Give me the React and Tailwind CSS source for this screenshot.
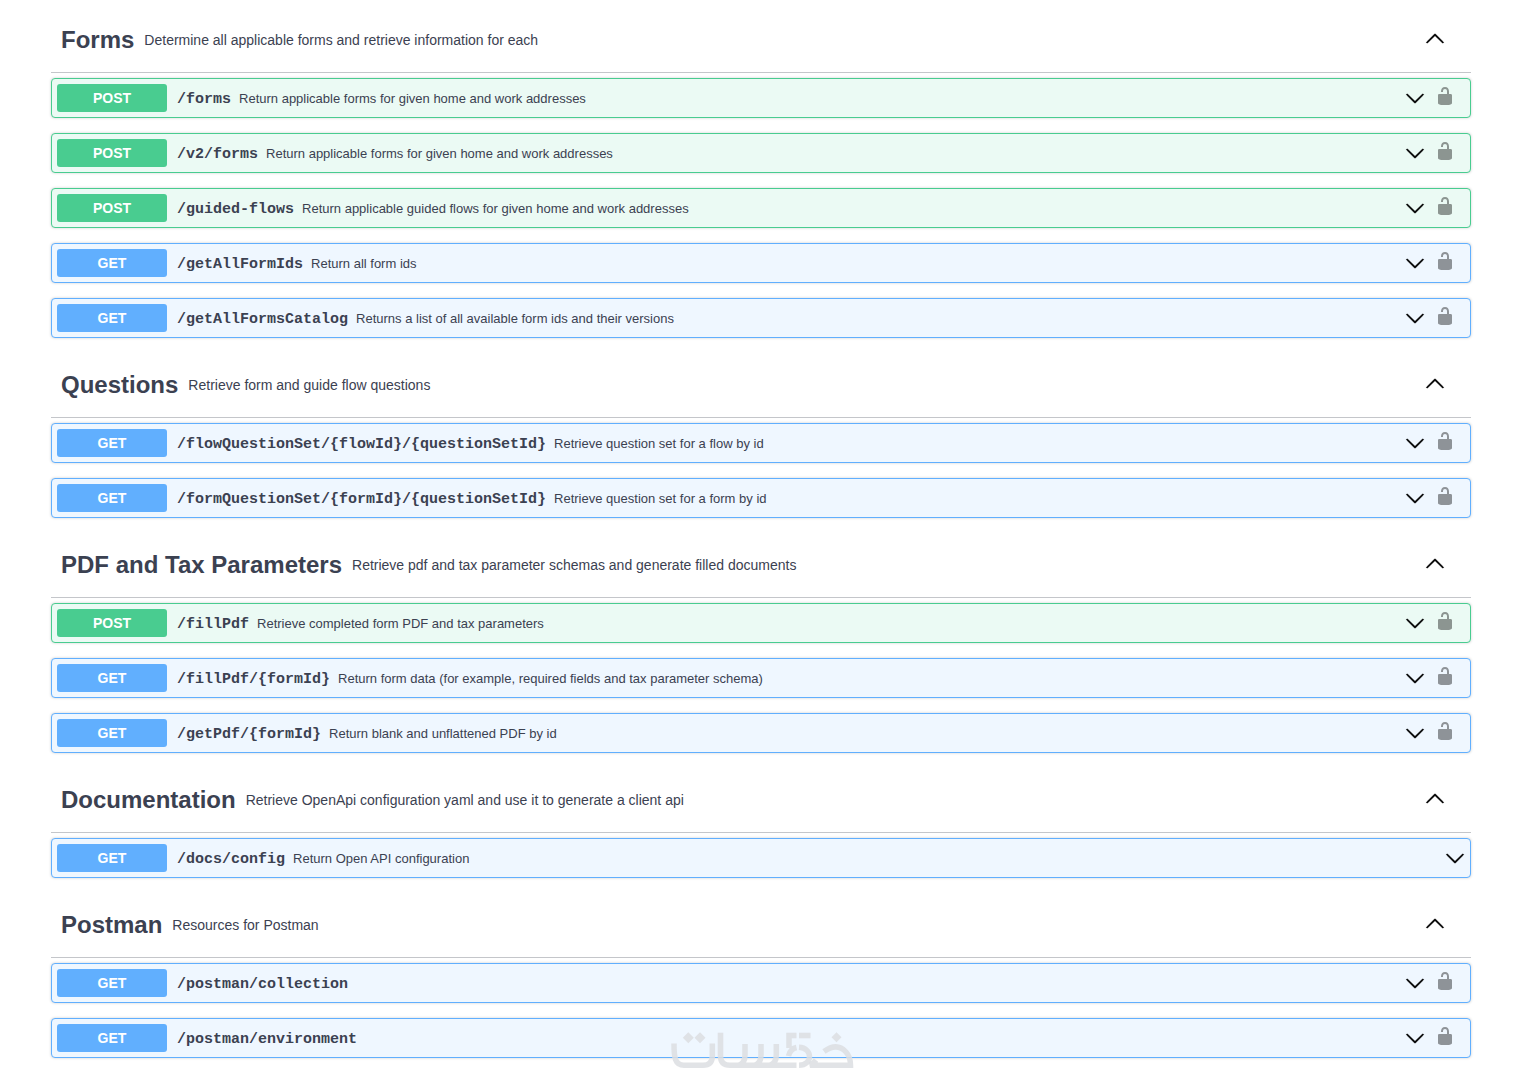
const sections = [
  {
    name: 'Forms',
    description: 'Determine all applicable forms and retrieve information for each',
    operations: [
      { method: 'POST', path: '/forms', summary: 'Return applicable forms for given home and work addresses', auth: true },
      { method: 'POST', path: '/v2/forms', summary: 'Return applicable forms for given home and work addresses', auth: true },
      { method: 'POST', path: '/guided-flows', summary: 'Return applicable guided flows for given home and work addresses', auth: true },
      { method: 'GET', path: '/getAllFormIds', summary: 'Return all form ids', auth: true },
      { method: 'GET', path: '/getAllFormsCatalog', summary: 'Returns a list of all available form ids and their versions', auth: true },
    ],
  },
  {
    name: 'Questions',
    description: 'Retrieve form and guide flow questions',
    operations: [
      { method: 'GET', path: '/flowQuestionSet/{flowId}/{questionSetId}', summary: 'Retrieve question set for a flow by id', auth: true },
      { method: 'GET', path: '/formQuestionSet/{formId}/{questionSetId}', summary: 'Retrieve question set for a form by id', auth: true },
    ],
  },
  {
    name: 'PDF and Tax Parameters',
    description: 'Retrieve pdf and tax parameter schemas and generate filled documents',
    operations: [
      { method: 'POST', path: '/fillPdf', summary: 'Retrieve completed form PDF and tax parameters', auth: true },
      { method: 'GET', path: '/fillPdf/{formId}', summary: 'Return form data (for example, required fields and tax parameter schema)', auth: true },
      { method: 'GET', path: '/getPdf/{formId}', summary: 'Return blank and unflattened PDF by id', auth: true },
    ],
  },
  {
    name: 'Documentation',
    description: 'Retrieve OpenApi configuration yaml and use it to generate a client api',
    operations: [
      { method: 'GET', path: '/docs/config', summary: 'Return Open API configuration', auth: false },
    ],
  },
  {
    name: 'Postman',
    description: 'Resources for Postman',
    operations: [
      { method: 'GET', path: '/postman/collection', summary: '', auth: true },
      { method: 'GET', path: '/postman/environment', summary: '', auth: true },
    ],
  },
]

const methodStyles = {
  POST: { row: 'border-[#49cc90] bg-[#ebfaf4]', badge: 'bg-[#49cc90]' },
  GET: { row: 'border-[#61affe] bg-[#eff7ff]', badge: 'bg-[#61affe]' },
}

function ArrowUp() {
  return (
    <svg viewBox="0 0 20 20" className="size-5" fill="currentColor" stroke="currentColor" strokeWidth="0.4" aria-hidden="true">
      <path d="M17.418 14.908c.272.268.709.268.979 0s.271-.701 0-.969l-7.908-7.83c-.27-.268-.707-.268-.979 0l-7.908 7.83c-.27.268-.27.701 0 .969.271.268.709.268.979 0L10 7.767l7.418 7.141z" />
    </svg>
  )
}

function ArrowDown() {
  return (
    <svg viewBox="0 0 20 20" className="size-5" fill="currentColor" stroke="currentColor" strokeWidth="0.4" aria-hidden="true">
      <path d="M17.418 6.109c.272-.268.709-.268.979 0s.271.701 0 .969l-7.908 7.83c-.27.268-.707.268-.979 0l-7.908-7.83c-.27-.268-.27-.701 0-.969.271-.268.709-.268.979 0L10 13.25l7.418-7.141z" />
    </svg>
  )
}

function Unlocked() {
  return (
    <svg viewBox="0 0 20 20" className="size-5 opacity-40" fill="currentColor" aria-hidden="true">
      <path d="M15.8 8H14V5.6C14 2.703 12.665 1 10 1 7.334 1 6 2.703 6 5.6V6h2v-.801C8 3.754 8.797 3 10 3c1.203 0 2 .754 2 2.199V8H4c-.553 0-1 .646-1 1.199V17c0 .549.428 1.139.951 1.307l1.197.387C5.672 18.861 6.55 19 7.1 19h5.8c.549 0 1.428-.139 1.951-.307l1.196-.387c.524-.167.953-.757.953-1.306V9.199C17 8.646 16.352 8 15.8 8z" />
    </svg>
  )
}

function Operation({ method, path, summary, auth }) {
  const styles = methodStyles[method]

  return (
    <div className={`flex h-10 items-center rounded border px-[5px] shadow-[0_0_3px_rgba(0,0,0,0.19)] ${styles.row}`}>
      <button className="flex flex-1 items-center text-left">
        <span className={`w-[110px] rounded-[3px] text-center text-sm leading-7 font-bold text-white ${styles.badge}`}>
          {method}
        </span>
        <span className="pt-1 pl-[10px] font-['Liberation_Mono',monospace] text-[15px] leading-5 font-bold">{path}</span>
        <span className="pt-0.5 pl-2 text-[13px] leading-5">{summary}</span>
      </button>
      <button className="text-black" aria-label={`Expand ${path}`}>
        <ArrowDown />
      </button>
      {auth && (
        <button className="px-[10px] pb-1 text-black" aria-label={`Authorize ${path}`}>
          <Unlocked />
        </button>
      )}
    </div>
  )
}

function Section({ name, description, operations }) {
  return (
    <section>
      <header className="flex h-[65px] items-center border-b border-[#3b4151]/30 pr-[26px] pl-[10px]">
        <h2 className="text-2xl font-bold">{name}</h2>
        <p className="flex-1 pl-[10px] text-sm">{description}</p>
        <button className="pb-1 text-black" aria-label={`Collapse ${name}`}>
          <ArrowUp />
        </button>
      </header>
      <div className="flex flex-col gap-[15px] pt-[5px] pb-[15px]">
        {operations.map(op => (
          <Operation key={op.path} {...op} />
        ))}
      </div>
    </section>
  )
}

function Watermark() {
  return (
    <svg
      viewBox="0 0 184 38"
      className="pointer-events-none absolute bottom-[21px] left-1/2 h-[38px] w-[184px] -translate-x-1/2"
      fill="none"
      stroke="#dcdee2"
      strokeOpacity="0.85"
      strokeWidth="5.5"
      role="img"
      aria-label="خمسات"
    >
      <path d="M3 11.500C3 26 4 33.300 13 33.300H32Q41.300 33.300 41.300 24V11.500" />
      <path d="M49.500 .7V24Q49.500 33.300 59 33.300H125.500M74 12V23Q74 31 68 33M90 12V23Q90 31 84 33M105.300 12V23Q105.300 31 99 33" />
      <path d="M125.500 3.500H118V16M128 3.500H139.500M117.500 24Q119 17 125.500 15.500M128 15.300C142 16 142 33 128 33.300" />
      <path d="M153 19.500Q166 10 175 20Q179.500 25 179.500 33.300H139Q142 32 145 28" />
      <path
        d="M17.300 .2l5.500 5.500-5.500 5.500-5.500-5.500zM29 .2l5.500 5.500-5.500 5.500-5.500-5.500zM165.500 .2l5 5-5 5-5-5z"
        fill="#dcdee2"
        fillOpacity="0.85"
        stroke="none"
      />
    </svg>
  )
}

export default function App() {
  return (
    <main className="relative bg-white pt-2 pr-[54px] pb-[18px] pl-[51px] font-['Liberation_Sans',Arial,sans-serif] text-[#3b4151]">
      {sections.map(section => (
        <Section key={section.name} {...section} />
      ))}
      <Watermark />
    </main>
  )
}
